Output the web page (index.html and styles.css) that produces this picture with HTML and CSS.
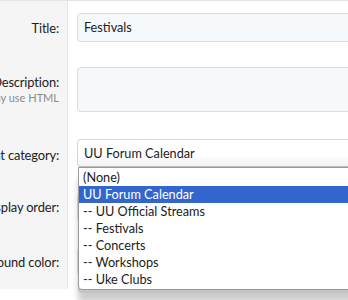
FILE: index.html
```html
<!DOCTYPE html>
<html>
<head>
<meta charset="utf-8">
<link rel="stylesheet" href="styles.css">
</head>
<body>
<div class="form">
  <div class="row r1">
    <div class="label"><span>Title:</span></div>
    <div class="field"><div class="input">Festivals</div></div>
  </div>
  <div class="row r2">
    <div class="label top"><span>Description:</span><span class="hint">may use HTML</span></div>
    <div class="field"><div class="textarea"></div></div>
  </div>
  <div class="row r3">
    <div class="label"><span>Parent category:</span></div>
    <div class="field"><div class="select">UU Forum Calendar</div></div>
  </div>
  <div class="row r4">
    <div class="label"><span>Display order:</span></div>
    <div class="field"><div class="input"></div></div>
  </div>
  <div class="row r5">
    <div class="label"><span>Background color:</span></div>
    <div class="field"><div class="input"></div></div>
  </div>
</div>
<ul class="dropdown">
  <li>(None)</li>
  <li class="sel">UU Forum Calendar</li>
  <li>-- UU Official Streams</li>
  <li>-- Festivals</li>
  <li>-- Concerts</li>
  <li>-- Workshops</li>
  <li>-- Uke Clubs</li>
</ul>
</body>
</html>
```
FILE: styles.css
```css
html, body {
  margin: 0;
  padding: 0;
  background: #fff;
  overflow: hidden;
}
body {
  font-family: Lato, "Noto Sans", sans-serif;
  font-size: 12.7px;
  color: #222;
  width: 348px;
  height: 300px;
  position: relative;
}
.form {
  border-top: 1px solid #e4e4e4;
  display: flex;
  flex-direction: column;
}
.row {
  display: grid;
  grid-template-columns: 68px 1fr;
}
.label {
  background: #f5f5f5;
  border-right: 1px solid #e6e6e6;
  display: flex;
  flex-direction: column;
  align-items: flex-end;
  justify-content: center;
  padding-right: 8px;
  overflow: hidden;
  white-space: nowrap;
  color: #222;
  font-size: 12.9px;
  letter-spacing: -0.15px;
}
.label.top {
  justify-content: flex-start;
  padding-top: 6px;
  line-height: 16px;
}
.label.top span:first-child { margin-top: 13px; }
.hint {
  font-size: 11px;
  color: #8a8a8a;
  line-height: 16px;
  letter-spacing: 0;
}
.r3 .label { padding-top: 6px; box-sizing: border-box; }
.field {
  padding: 12px 0 13px 9px;
  overflow: hidden;
}
.input, .textarea, .select {
  box-sizing: border-box;
  width: 300px;
  border: 1px solid #d8dde2;
  border-radius: 4px;
  background: #f6f9fc;
  padding: 0 6px;
  white-space: nowrap;
  font-size: 12.7px;
}
.input { height: 29px; line-height: 27px; }
.textarea { height: 45px; }
.select {
  height: 28px;
  line-height: 26px;
  background: linear-gradient(#fff 60%, #f2f2f2);
  border-color: #d6d6d6;
  border-bottom-color: #bdbdbd;
}
.r3 .field { padding-top: 14px; padding-bottom: 11px; }
.r4 .field { padding-top: 15px; }
.dropdown {
  position: absolute;
  left: 78px;
  top: 167px;
  width: 300px;
  margin: 0;
  padding: 1px 0;
  list-style: none;
  background: #fff;
  border: 1px solid #9a9a9a;
  border-radius: 0 0 4px 4px;
  box-shadow: 0 3px 0 0 #c4c4c4, 0 12px 6px rgba(0,0,0,0.2);
  font-size: 12.7px;
}
.dropdown li {
  height: 17px;
  line-height: 17px;
  padding-left: 4px;
  white-space: nowrap;
  color: #222;
}
.dropdown li.sel {
  background: #3366cc;
  color: #fff;
}
```
